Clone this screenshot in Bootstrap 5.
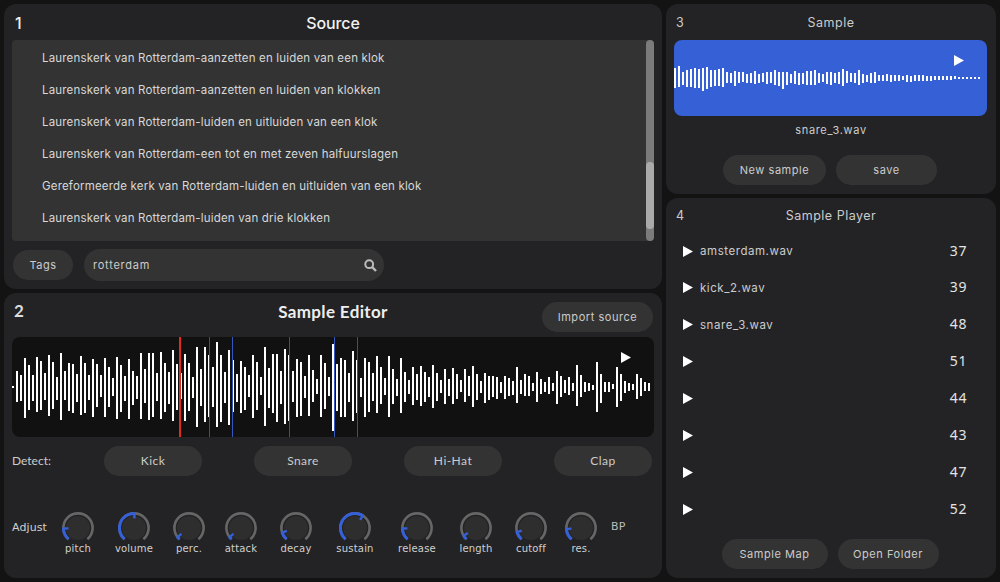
<!doctype html>
<html lang="nl">
<head>
<meta charset="utf-8">
<title>Sampler</title>
<link href="https://cdn.jsdelivr.net/npm/bootstrap@5.3.0/dist/css/bootstrap.min.css" rel="stylesheet">
<style>
html,body{height:582px;overflow:hidden}
body{background:#131314;color:#ddd;font-family:Inter,"Liberation Sans",sans-serif;font-size:11px}
.app-grid{display:grid;grid-template-columns:658px 330px;gap:4px;padding:4px;height:582px}
.app-col{display:flex;flex-direction:column;gap:4px;min-height:0}
.panel{background:#232325;border-radius:12px;padding:0 8px;display:flex;flex-direction:column;min-height:0}
.panel-a{height:285px}
.panel-c{height:190px}
.panel-d{height:380px}
.head-row{display:grid;grid-template-columns:1fr auto 1fr;align-items:center;height:36px;padding-top:2px}
.head-num{font-size:16px;font-weight:500;padding-left:3px;color:#eee}
.head-title{font-size:16px;font-weight:500;color:#f2f2f2;letter-spacing:-.1px}
.head-small .head-num,.head-small .head-title{font-size:12.5px;font-weight:400;color:#ccc}
.head-small .head-title{letter-spacing:.5px}
.head-small .head-num{padding-left:2px}
.editor-head{height:30px;margin-top:9px;margin-bottom:5px;padding-top:0;align-items:start}
.editor-title{font-family:Lato,sans-serif;font-weight:700;font-size:17px;letter-spacing:.35px;color:#eee;line-height:20px}
.editor-num{font-family:Lato,sans-serif;font-size:17px;font-weight:700;padding-left:2px;line-height:18px}
.src-list{height:201px;background:#333;border-radius:4px;padding-top:2px;overflow:hidden}
.src-list .list-group-item{background:transparent;border:0;color:#d8d8d8;padding:0 0 0 30px;height:32px;flex-shrink:0;line-height:32px;font-size:11.5px;letter-spacing:.18px;white-space:nowrap}
.fake-bar{position:absolute;right:0;top:0;width:8px;height:201px;border-radius:4px;background:#7b7b7b}
.fake-thumb{position:absolute;left:0;top:122px;width:8px;height:67px;border-radius:4px;background:#aaa}
.pill-btn{background:#333;border:0;border-radius:15px;color:#ccc;font-size:11px;height:30px;padding:0;letter-spacing:.55px;line-height:30px}
.pill-btn:hover,.pill-btn:focus{background:#3a3a3a;color:#ddd}
.w-tags{width:60px;margin-left:1px}
.w-import{width:111px;margin-right:1px}
.w-new{width:103px}.w-save{width:101px}.w-map{width:106px}.w-open{width:101px}
.w-detect{width:98px;font-family:Lato,sans-serif;font-size:12px;letter-spacing:.45px}
.search-row{margin-top:8px;gap:11px;height:32px}
.search-box{width:300px;height:32px}
.search-input{background:#333;border:0;border-radius:16px;color:#ccc;font-size:11px;height:32px;padding:0 28px 0 9px;letter-spacing:.75px}
.search-input:focus{background:#333;color:#ccc;box-shadow:none}
.search-icon{position:absolute;right:7px;top:10px}
.wave-a{display:block;width:642px;height:100px;background:#111;border-radius:8px}
.wave-c{display:block;width:313px;height:76px;background:#3660d6;border-radius:8px}
.file-name{height:29px;line-height:28px;text-align:center;font-size:11px;letter-spacing:.65px;color:#ccc}
.detect-row{margin-top:9px;height:30px;padding-right:2px}
.detect-lab{width:92px;font-family:Lato,sans-serif;font-size:12px;letter-spacing:0;color:#ccc}
.knob-row{display:grid;grid-template-columns:38px 56px 56px 54px 50px 60px 58px 66px 52px 58px 42px auto;margin-top:35px;font-family:"DejaVu Sans",sans-serif;font-size:10px;letter-spacing:.2px;color:#d0d0d0}
.knob-side{font-size:11px;letter-spacing:.1px;line-height:33px}
.knob-cell{display:flex;flex-direction:column;align-items:center;line-height:12px}
.knob-cell svg{display:block;margin-bottom:-2px}
.knob-bp{padding-left:9px;color:#bbb;line-height:31px}
.tool-row{gap:10px;margin-top:10px;margin-right:2px}
.player-list .list-group-item{background:transparent;border:0;color:#ccc;padding:0 21px 0 9px;height:36.86px;flex-shrink:0;display:flex;align-items:center;font-size:11.5px;letter-spacing:.55px}
.player-name{margin-left:7px;padding-top:2px}
.player-num{margin-left:auto;font-family:"Noto Sans",sans-serif;font-size:14px;letter-spacing:.6px;color:#e4e4e4;padding-bottom:2px}
.player-head{height:34.6px;padding-top:3px}
.tool-row-b{gap:10px;margin-top:11.5px;margin-right:2px}
</style>
</head>
<body>
<div class="app-grid">
  <div class="app-col">
    <section class="panel panel-a">
      <div class="head-row"><span class="head-num">1</span><span class="head-title">Source</span><span></span></div>
      <div class="position-relative">
        <ul class="list-group src-list">
          <li class="list-group-item">Laurenskerk van Rotterdam-aanzetten en luiden van een klok</li>
          <li class="list-group-item">Laurenskerk van Rotterdam-aanzetten en luiden van klokken</li>
          <li class="list-group-item">Laurenskerk van Rotterdam-luiden en uitluiden van een klok</li>
          <li class="list-group-item">Laurenskerk van Rotterdam-een tot en met zeven halfuurslagen</li>
          <li class="list-group-item">Gereformeerde kerk van Rotterdam-luiden en uitluiden van een klok</li>
          <li class="list-group-item">Laurenskerk van Rotterdam-luiden van drie klokken</li>
        </ul>
        <div class="fake-bar"><div class="fake-thumb"></div></div>
      </div>
      <div class="d-flex align-items-center search-row">
        <button class="btn pill-btn w-tags">Tags</button>
        <div class="position-relative search-box">
          <input class="form-control search-input" value="rotterdam" aria-label="Search">
          <svg class="search-icon" width="13" height="13" viewBox="0 0 13 13" fill="none" stroke="#bbb"><circle cx="5.2" cy="5.2" r="3.9" stroke-width="2"/><path d="M8.2 8.2 12 12" stroke-width="2.4"/></svg>
        </div>
      </div>
    </section>
    <section class="panel panel-a">
      <div class="head-row editor-head"><span class="editor-num">2</span><span class="editor-title">Sample Editor</span><span class="d-flex justify-content-end"><button class="btn pill-btn w-import">Import source</button></span></div>
      <svg id="waveA" class="wave-a" viewBox="0 0 642 100"></svg>
      <div class="d-flex align-items-center detect-row">
        <span class="detect-lab">Detect:</span>
        <div class="d-flex justify-content-between flex-grow-1">
          <button class="btn pill-btn w-detect">Kick</button>
          <button class="btn pill-btn w-detect">Snare</button>
          <button class="btn pill-btn w-detect">Hi-Hat</button>
          <button class="btn pill-btn w-detect">Clap</button>
        </div>
      </div>
      <div class="knob-row" id="knobs"><span class="knob-side">Adjust</span></div>
    </section>
  </div>
  <div class="app-col">
    <section class="panel panel-c">
      <div class="head-row head-small"><span class="head-num">3</span><span class="head-title">Sample</span><span></span></div>
      <svg id="waveC" class="wave-c" viewBox="0 0 313 76"></svg>
      <div class="file-name">snare_3.wav</div>
      <div class="d-flex justify-content-center">
        <div class="d-flex tool-row">
          <button class="btn pill-btn w-new">New sample</button>
          <button class="btn pill-btn w-save">save</button>
        </div>
      </div>
    </section>
    <section class="panel panel-d">
      <div class="head-row head-small player-head"><span class="head-num">4</span><span class="head-title">Sample Player</span><span></span></div>
      <ul class="list-group player-list" id="players"></ul>
      <div class="d-flex justify-content-center">
        <div class="d-flex tool-row-b">
          <button class="btn pill-btn w-map">Sample Map</button>
          <button class="btn pill-btn w-open">Open Folder</button>
        </div>
      </div>
    </section>
  </div>
</div>
<script>
var NS='http://www.w3.org/2000/svg';
function el(parent,name,attrs){var e=document.createElementNS(NS,name);for(var k in attrs)e.setAttribute(k,attrs[k]);parent.appendChild(e);return e;}
var A=[152,158,108,200,120,197,69,248,90,225,120,197,66,230,78,224,114,196,60,242,81,221,126,194,54,254,108,194,84,228,87,233,117,200,63,239,84,233,120,194,72,245,87,215,120,185,69,245,96,215,129,182,66,251,90,230,123,197,72,251,108,209,123,191,54,251,102,203,54,254,54,245,114,197,51,251,84,230,111,206,45,257,87,224,114,191,57,257,84,227,126,188,36,275,102,212,36,260,60,245,96,215,21,275,60,260,111,205,45,269,75,230,117,200,78,233,96,224,120,185,60,248,81,225,126,179,36,272,99,218,57,233,57,260,108,206,42,266,60,257,108,200,72,245,81,242,123,188,60,242,105,200,132,176,60,245,84,221,126,182,
27,287,87,227,69,245,75,245,114,200,48,257,75,233,129,185,69,245,81,230,114,197,63,233,96,206,129,179,63,245,102,206,132,182,69,233,111,200,135,176,96,209,117,194,93,212,111,200,126,185,90,218,114,197,135,173,102,206,132,182,99,206,117,191,135,170,102,200,123,182,93,215,117,194,138,173,114,203,123,194,123,185,126,191,141,173,123,191,129,182,138,179,96,203,135,176,117,182,123,182,144,167,111,200,132,176,141,170,126,176,144,167,108,206,123,185,135,173,126,179,144,167,90,213,120,185,141,170,144,167,150,164,81,230,117,203,141,170,141,170,147,161,96,215,117,197,138,173,144,167,147,164,117,191,129,182,141,167,144,167];
var C=[203,265,198,262,215,254,209,262,206,262,203,265,206,265,203,272,200,268,209,260,209,257,206,257,203,260,215,250,218,248,212,257,215,250,215,245,221,248,218,248,212,251,221,248,218,245,215,251,215,250,209,254,215,257,215,266,215,254,221,248,212,251,218,254,218,251,212,254,212,254,209,254,218,248,221,245,215,251,215,254,218,248,215,251,206,257,212,248,218,245,218,248,209,254,221,248,224,245,218,248,215,248,224,242,224,242,221,242,224,245,224,242,224,242,227,239,224,245,227,245,224,242,224,242,224,242,227,242,227,242,227,239,227,239,227,239,227,239,227,239,227,236,230,236,230,236,230,236,230,236,230,236,230,236];
var wa=document.getElementById('waveA'),wc=document.getElementById('waveC');
for(var i=0;i<A.length;i+=2){var t=Math.round(A[i]/3-2),b=Math.round(A[i+1]/3-2);el(wa,'rect',{x:4*(i/2),y:t,width:2,height:b-t,fill:'#fff','shape-rendering':'crispEdges'});}
[[197,1,'#2f4f9f'],[220,1,'#3358c0'],[277,1,'#2f4f9f'],[322,1,'#3358c0'],[345,1,'#2f4f9f'],[167,2,'#e02b20']].forEach(function(l){el(wa,'rect',{x:l[0],y:0,width:l[1],height:100,fill:l[2],'shape-rendering':'crispEdges'});});
el(wa,'polygon',{points:'609,15 619,20.5 609,26',fill:'#fff'});
for(var j=0;j<C.length;j+=2){var t2=Math.round(C[j]/3-40),b2=Math.round(C[j+1]/3-40);el(wc,'rect',{x:4*(j/2),y:t2,width:2,height:b2-t2,fill:'#fff','shape-rendering':'crispEdges'});}
el(wc,'polygon',{points:'280,15 290,20.5 280,26',fill:'#fff'});

var R=14.6,S=-140,E=140;
function pt(a,r){var q=(a-90)*Math.PI/180;return [(17+r*Math.cos(q)).toFixed(2),(17+r*Math.sin(q)).toFixed(2)];}
function arc(a,b,r){var p=pt(a,r),q=pt(b,r);return 'M'+p[0]+' '+p[1]+'A'+r+' '+r+' 0 '+((b-a)>180?1:0)+' 1 '+q[0]+' '+q[1];}
var kn=document.getElementById('knobs');
[['pitch',-92],['volume',2],['perc.',-128],['attack',-128],['decay',-108],['sustain',32],['release',-92],['length',-122],['cutoff',-106],['res.',-94]].forEach(function(k){
  var c=document.createElement('div');c.className='knob-cell';
  var s=el(c,'svg',{width:34,height:34,viewBox:'0 0 34 34'});
  el(s,'circle',{cx:17,cy:17,r:12,fill:'#2e2e2f'});
  el(s,'path',{d:arc(S,E,R),fill:'none',stroke:'#666','stroke-width':2.6});
  el(s,'path',{d:arc(S,k[1],R),fill:'none',stroke:'#3560d8','stroke-width':3});
  var a=pt(k[1],R+1),b=pt(k[1],R-5);
  el(s,'path',{d:'M'+a[0]+' '+a[1]+'L'+b[0]+' '+b[1],stroke:'#3560d8','stroke-width':2.4});
  var l=document.createElement('span');l.textContent=k[0];c.appendChild(l);kn.appendChild(c);
});
var bp=document.createElement('span');bp.className='knob-side knob-bp';bp.textContent='BP';kn.appendChild(bp);

var pl=document.getElementById('players');
[['amsterdam.wav',37],['kick_2.wav',39],['snare_3.wav',48],['',51],['',44],['',43],['',47],['',52]].forEach(function(p){
  var li=document.createElement('li');li.className='list-group-item';
  var s=el(li,'svg',{width:10,height:11,viewBox:'0 0 10 11'});el(s,'polygon',{points:'0,0 10,5.5 0,11',fill:'#fff'});
  var n=document.createElement('span');n.className='player-name';n.textContent=p[0];li.appendChild(n);
  var m=document.createElement('span');m.className='player-num';m.textContent=p[1];li.appendChild(m);pl.appendChild(li);
});
</script>
<script src="https://cdn.jsdelivr.net/npm/bootstrap@5.3.0/dist/js/bootstrap.bundle.min.js"></script>
</body>
</html>
